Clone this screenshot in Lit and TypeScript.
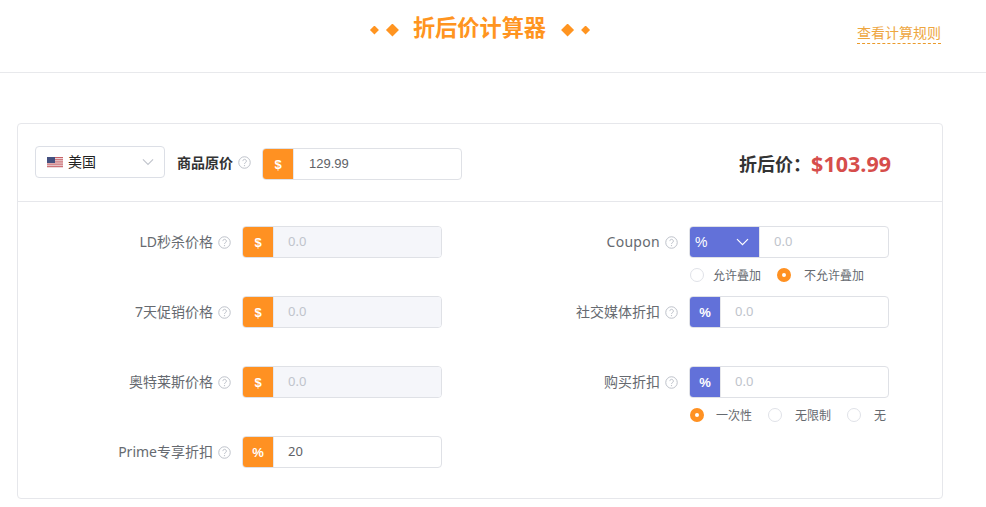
import { LitElement, html, css, svg } from "lit";
import { customElement } from "lit/decorators.js";

const help = html`<svg class="help" viewBox="0 0 14 14" width="13" height="13">
  <circle cx="7" cy="7" r="6.2" fill="none" stroke="#b9bdc6" stroke-width="1"/>
  <path d="M5.2 5.5a1.9 1.9 0 1 1 2.9 1.6c-.7.4-1.1.8-1.1 1.5" fill="none" stroke="#b9bdc6" stroke-width="1"/>
  <circle cx="7" cy="10.3" r=".7" fill="#b9bdc6"/>
</svg>`;

const chevron = (color: string, w = 13) => html`<svg viewBox="0 0 13 8" width=${w} height="8">
  <path d="M1 1.2l5.5 5.5L12 1.2" fill="none" stroke=${color} stroke-width="1.2"/>
</svg>`;

const stripes = [0, 2, 4, 6, 8, 10].map(
  (y) => svg`<rect x="0" y=${y * 0.92} width="16" height=".92" fill="#c4545c"/>`
);
const flag = html`<svg class="flag" viewBox="0 0 16 11" width="16" height="11">
  <rect width="16" height="11" fill="#f3eeee"/>${stripes}
  <rect width="8" height="6" fill="#44507f"/>
</svg>`;

const diamond = (s: number) => html`<span class="diamond" style="width:${s}px;height:${s}px"></span>`;

type Field = {
  label: string;
  unit: string;
  value?: string;
  disabled?: boolean;
  tone: "orange" | "blue";
};

@customElement("app-root")
export class AppRoot extends LitElement {
  static styles = css`
    :host {
      display: block;
      width: 986px;
      height: 507px;
      overflow: hidden;
      background: #fff;
      font-family: "Noto Sans", "Noto Sans CJK SC", sans-serif;
      color: #606266;
      box-sizing: border-box;
    }
    header {
      height: 72px;
      border-bottom: 1px solid #e8e9ec;
      display: flex;
      justify-content: center;
      align-items: flex-start;
      position: relative;
      box-sizing: content-box;
    }
    .title {
      margin-top: 13px;
      margin-right: 26px;
      display: flex;
      align-items: center;
      height: 32px;
      color: #ff9420;
      font-size: 22.2px;
      font-weight: 700;
      line-height: 32px;
    }
    .title span.text { margin: -2px 15px 0 14px; }
    .diamond {
      display: inline-block;
      background: #ff9420;
      clip-path: polygon(50% 0, 100% 50%, 50% 100%, 0 50%);
    }
    .dl { display: flex; align-items: center; gap: 7px; margin-top: 2px; }
    .rule {
      position: absolute;
      left: 857px;
      top: 24px;
      font-size: 14px;
      line-height: 18px;
      padding-bottom: 1px;
      color: #eea63f;
      border-bottom: 1px dashed #eb9a2a;
    }
    .card {
      margin: 50px 0 0 17px;
      width: 926px;
      height: 376px;
      box-sizing: border-box;
      border: 1px solid #e6e7eb;
      border-radius: 4px;
    }
    .top {
      height: 78px;
      border-bottom: 1px solid #e6e7eb;
      display: flex;
      align-items: flex-start;
      padding: 22px 0 0 17px;
      box-sizing: border-box;
    }
    .select {
      width: 130px;
      height: 32px;
      box-sizing: border-box;
      border: 1px solid #dcdfe6;
      border-radius: 4px;
      display: flex;
      align-items: center;
      padding: 0 10px 0 11px;
      font-size: 14px;
      color: #222;
      gap: 5px;
    }
    .select span:not(.arrow) { margin-bottom: 2px; }
    .select .arrow { margin-left: auto; display: flex; }
    .flag { flex: none; }
    .base {
      margin-left: 12px;
      margin-top: 1px;
      font-size: 14px;
      line-height: 32px;
      font-weight: 700;
      color: #333;
    }
    .help { flex: none; margin-left: 5px; }
    .top .help { margin-top: 10px; }
    .top .input { margin-left: 11px; margin-top: 2px; }
    .input {
      width: 200px;
      height: 32px;
      box-sizing: border-box;
      display: flex;
      border: 1px solid #dfe1e6;
      border-radius: 4px;
      overflow: hidden;
      flex: none;
      background: #fff;
    }
    .addon {
      width: 30px;
      flex: none;
      display: flex;
      align-items: center;
      justify-content: center;
      color: #fff;
      font: 700 13px "Liberation Sans", sans-serif;
      border-right: 1px solid #e6e7eb;
    }
    .addon.orange { background: #ff9122; }
    .addon.blue { background: #6271d9; }
    .addon.wide {
      width: 70px;
      justify-content: space-between;
      padding: 0 10px 0 5px;
      box-sizing: border-box;
      font-weight: 400;
      font-size: 14px;
    }
    .val {
      flex: 1;
      display: flex;
      align-items: center;
      padding: 0 0 2px 14px;
      font: 13px "Noto Sans", sans-serif;
      color: #606266;
    }
    .val.main { font: 13px "Liberation Sans", sans-serif; padding-bottom: 2px; padding-left: 15px; }
    .val.empty { color: #c0c4cc; }
    .val.off { background: #f5f6fa; }
    .result {
      margin-left: auto;
      margin-right: 51px;
      margin-top: 1px;
      display: flex;
      align-items: center;
      height: 32px;
      font-size: 18px;
      font-weight: 700;
      color: #333;
    }
    .result b { color: #d64d4b; font-size: 21.5px; font-weight: 700; font-family: "Open Sans", sans-serif; }
    .form {
      display: grid;
      grid-template-columns: 424px 447px;
      grid-auto-rows: 70px;
      padding-top: 24px;
    }
    .field { display: flex; flex-direction: column; }
    .line { display: flex; align-items: center; height: 32px; }
    .label {
      flex: 1;
      display: flex;
      justify-content: flex-end;
      align-items: center;
      margin-right: 11px;
      font-size: 14px;
      color: #666a70;
      white-space: nowrap;
    }
    .label span { margin-bottom: 2px; }
    .label span.latin { letter-spacing: .3px; }
    .radios {
      display: flex;
      align-items: center;
      margin-left: auto;
      width: 199px;
      height: 18px;
      margin-top: 8px;
      font-size: 12px;
      color: #666a70;
      white-space: nowrap;
    }
    .radio {
      width: 14px;
      height: 14px;
      box-sizing: border-box;
      border: 1px solid #e0e2e8;
      border-radius: 50%;
      flex: none;
      background: #fff;
    }
    .radio.on {
      border: 5px solid #ff9122;
      background: #fff;
    }
  `;

  private field(f: Field) {
    return html`<div class="line">
      <div class="label"><span>${f.label}</span>${help}</div>
      <div class="input">
        <div class="addon ${f.tone}">${f.unit}</div>
        <div class="val ${f.value ? "" : "empty"} ${f.disabled ? "off" : ""}">${f.value ?? "0.0"}</div>
      </div>
    </div>`;
  }

  private radio(label: string, on: boolean, gap: number, after: number) {
    return html`<span class="radio ${on ? "on" : ""}"></span>
      <span style="margin-left:${gap}px;margin-right:${after}px">${label}</span>`;
  }

  render() {
    return html`
      <header>
        <div class="title">
          <span class="dl">${diamond(9)}${diamond(13)}</span>
          <span class="text">折后价计算器</span>
          <span class="dl">${diamond(13)}${diamond(9)}</span>
        </div>
        <span class="rule">查看计算规则</span>
      </header>
      <section class="card">
        <div class="top">
          <div class="select">${flag}<span>美国</span><span class="arrow">${chevron("#c0c4cc", 12)}</span></div>
          <span class="base">商品原价</span>${help}
          <div class="input">
            <div class="addon orange">$</div>
            <div class="val main">129.99</div>
          </div>
          <div class="result">折后价：<b>$103.99</b></div>
        </div>
        <div class="form">
          <div class="field">${this.field({ label: "LD秒杀价格", unit: "$", disabled: true, tone: "orange" })}</div>
          <div class="field">
            <div class="line">
              <div class="label"><span class="latin">Coupon</span>${help}</div>
              <div class="input">
                <div class="addon blue wide">%${chevron("#fff")}</div>
                <div class="val empty">0.0</div>
              </div>
            </div>
            <div class="radios">
              ${this.radio("允许叠加", false, 9, 16)}${this.radio("不允许叠加", true, 13, 0)}
            </div>
          </div>
          <div class="field">${this.field({ label: "7天促销价格", unit: "$", disabled: true, tone: "orange" })}</div>
          <div class="field">${this.field({ label: "社交媒体折扣", unit: "%", tone: "blue" })}</div>
          <div class="field">${this.field({ label: "奥特莱斯价格", unit: "$", disabled: true, tone: "orange" })}</div>
          <div class="field">
            ${this.field({ label: "购买折扣", unit: "%", tone: "blue" })}
            <div class="radios">
              ${this.radio("一次性", true, 12, 16)}${this.radio("无限制", false, 13, 16)}${this.radio("无", false, 13, 0)}
            </div>
          </div>
          <div class="field">${this.field({ label: "Prime专享折扣", unit: "%", value: "20", tone: "orange" })}</div>
        </div>
      </section>
    `;
  }
}
